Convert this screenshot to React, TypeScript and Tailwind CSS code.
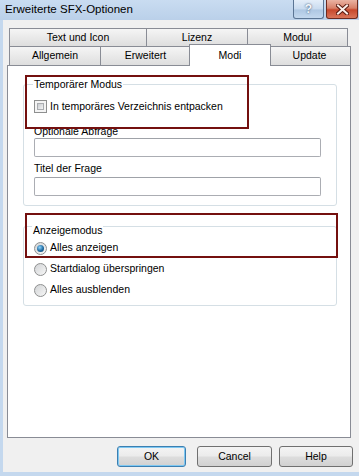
import React from "react";

const backTabs = [
  { label: "Text und Icon", w: "w-[138px]" },
  { label: "Lizenz", w: "w-[101px]" },
  { label: "Modul", w: "w-[100px]" },
];

function Checkbox() {
  return (
    <div className="w-[13px] h-[13px] border border-[#8e8f8f] bg-[#f4f4f4] p-[2px] shrink-0">
      <div className="w-full h-full border border-[#a9acb0] bg-gradient-to-br from-[#c9ccd0] to-[#f5f5f5]" />
    </div>
  );
}

function Radio({ checked }: { checked?: boolean }) {
  return (
    <div className="w-[13px] h-[13px] rounded-full border border-[#8e8f8f] bg-gradient-to-br from-[#d2d4d6] to-[#f7f7f7] flex items-center justify-center shrink-0">
      {checked && (
        <div className="w-[7px] h-[7px] rounded-full bg-[radial-gradient(circle_at_40%_35%,#8fd6ff,#1f6aa0_55%,#0c3a60)]" />
      )}
    </div>
  );
}

function TextBox() {
  return (
    <div className="h-[19px] w-[287px] border border-[#abadb3] border-t-[#9fa2a8] rounded-[2px] bg-white" />
  );
}

function Button({ label, w, primary }: { label: string; w: string; primary?: boolean }) {
  return (
    <div
      className={
        "h-[21px] rounded-[3px] border flex items-center justify-center bg-[linear-gradient(#f4f4f4,#ebebeb_48%,#dddddd_52%,#d1d1d1)] " +
        w +
        (primary ? " border-[#3c7fb1] shadow-[inset_0_0_0_1px_#7ec8f2]" : " border-[#707070]")
      }
    >
      {label}
    </div>
  );
}

export default function App() {
  return (
    <div className="w-[359px] h-[476px] flex flex-col bg-[#c4d8ee] font-['Liberation_Sans',Arial,sans-serif] text-[10.5px] text-black overflow-hidden">
      {/* title bar */}
      <div className="h-[20px] flex items-start bg-gradient-to-b from-[#c9dcf1] to-[#bad0e9] shrink-0">
        <span className="pl-[5px] pt-[2px] leading-[15px] text-[11.5px]">Erweiterte SFX-Optionen</span>
        <div className="ml-auto flex gap-[2px] pr-[1px]">
          <div className="w-[31px] h-[19px] rounded-b-[3px] border border-t-0 border-[#5b7594] bg-[linear-gradient(#e4eef9,#c9dbef_50%,#aec7e3_55%,#c3d8ee)] flex items-center justify-center text-[12px] font-bold text-[#f4f8fc] [text-shadow:0_0_2px_#1f3a5a]">
            ?
          </div>
          <div className="w-[32px] h-[19px] rounded-b-[3px] border border-t-0 border-[#6b2a1f] bg-[linear-gradient(#eab3a3,#d88069_45%,#c7482c_55%,#d9755a)] flex items-center justify-center">
            <svg width="13" height="11" viewBox="0 0 13 11">
              <path d="M2 1.5 L11 9.5 M11 1.5 L2 9.5" stroke="#5a1a10" strokeWidth="4" strokeLinecap="square" />
              <path d="M2 1.5 L11 9.5 M11 1.5 L2 9.5" stroke="#fbeee9" strokeWidth="2" strokeLinecap="square" />
            </svg>
          </div>
        </div>
      </div>

      {/* client area */}
      <div className="flex-1 ml-[3px] mb-[4px] bg-[#f0f0f0] flex flex-col pl-[4px] pt-[8px]">
        <div className="w-[344px] flex flex-col">
          {/* back row of tabs */}
          <div className="flex pl-[2px] h-[18px]">
            {backTabs.map((t, i) => (
              <div
                key={t.label}
                className={
                  "h-full border-t border-r border-[#898c95] bg-gradient-to-b from-[#f5f5f5] to-[#dedede] flex items-center justify-center " +
                  t.w +
                  (i === 0 ? " border-l" : "")
                }
              >
                {t.label}
              </div>
            ))}
          </div>
          {/* front row of tabs */}
          <div className="flex pl-[2px] h-[19px]">
            <div className="w-[92px] h-full border-t border-l border-r border-[#898c95] bg-gradient-to-b from-[#f5f5f5] to-[#dedede] flex items-center justify-center">
              Allgemein
            </div>
            <div className="w-[90px] h-full border-t border-r border-[#898c95] bg-gradient-to-b from-[#f5f5f5] to-[#dedede] flex items-center justify-center">
              Erweitert
            </div>
            <div className="relative z-10 w-[82px] h-[22px] -mt-[2px] -mx-[2px] border border-b-0 border-[#898c95] bg-white flex items-start justify-center pt-[3px]">
              Modi
            </div>
            <div className="w-[82px] h-full border-t border-r border-[#898c95] bg-gradient-to-b from-[#f5f5f5] to-[#dedede] flex items-center justify-center">
              Update
            </div>
          </div>

          {/* panel */}
          <div className="relative h-[373px] border border-[#898c95] bg-white pt-[18px] px-[15px]">
            {/* Temporärer Modus */}
            <div className="w-[314px] border border-[#d5dfe5] rounded-[3px] pl-[10px] pr-[15px] pb-[9px]">
              <div className="-mt-[8px] -ml-[1px] h-[14px] leading-[14px] w-fit px-[1px] bg-white">Temporärer Modus</div>
              <div className="mt-[9px] h-[13px] flex items-center gap-[3px]">
                <Checkbox />
                <span className="leading-[13px]">In temporäres Verzeichnis entpacken</span>
              </div>
              <div className="mt-[11px] h-[14px] leading-[14px]">Optionale Abfrage</div>
              <TextBox />
              <div className="mt-[4px] h-[14px] leading-[14px]">Titel der Frage</div>
              <div className="mt-[2px]">
                <TextBox />
              </div>
            </div>

            {/* Anzeigemodus */}
            <div className="mt-[20px] w-[314px] border border-[#d5dfe5] rounded-[3px] pl-[10px] pr-[15px] pb-[8px]">
              <div className="-mt-[4px] -ml-[2px] h-[14px] leading-[14px] w-fit px-[1px] bg-white">Anzeigemodus</div>
              <div className="mt-[4px] h-[14px] flex items-center gap-[3px]">
                <Radio checked />
                <span>Alles anzeigen</span>
              </div>
              <div className="mt-[7px] h-[14px] flex items-center gap-[3px]">
                <Radio />
                <span>Startdialog überspringen</span>
              </div>
              <div className="mt-[7px] h-[14px] flex items-center gap-[3px]">
                <Radio />
                <span>Alles ausblenden</span>
              </div>
            </div>

            {/* highlight annotations */}
            <div className="absolute left-[17px] top-[9px] w-[224px] h-[54px] border-2 border-[#74100f]" />
            <div className="absolute left-[17px] top-[147px] w-[313px] h-[45px] border-2 border-[#74100f]" />
          </div>
        </div>

        {/* buttons */}
        <div className="flex mt-[8px] ml-[110px]">
          <Button label="OK" w="w-[69px]" primary />
          <div className="ml-[11px]">
            <Button label="Cancel" w="w-[75px]" />
          </div>
          <div className="ml-[7px]">
            <Button label="Help" w="w-[74px]" />
          </div>
        </div>
      </div>
    </div>
  );
}
